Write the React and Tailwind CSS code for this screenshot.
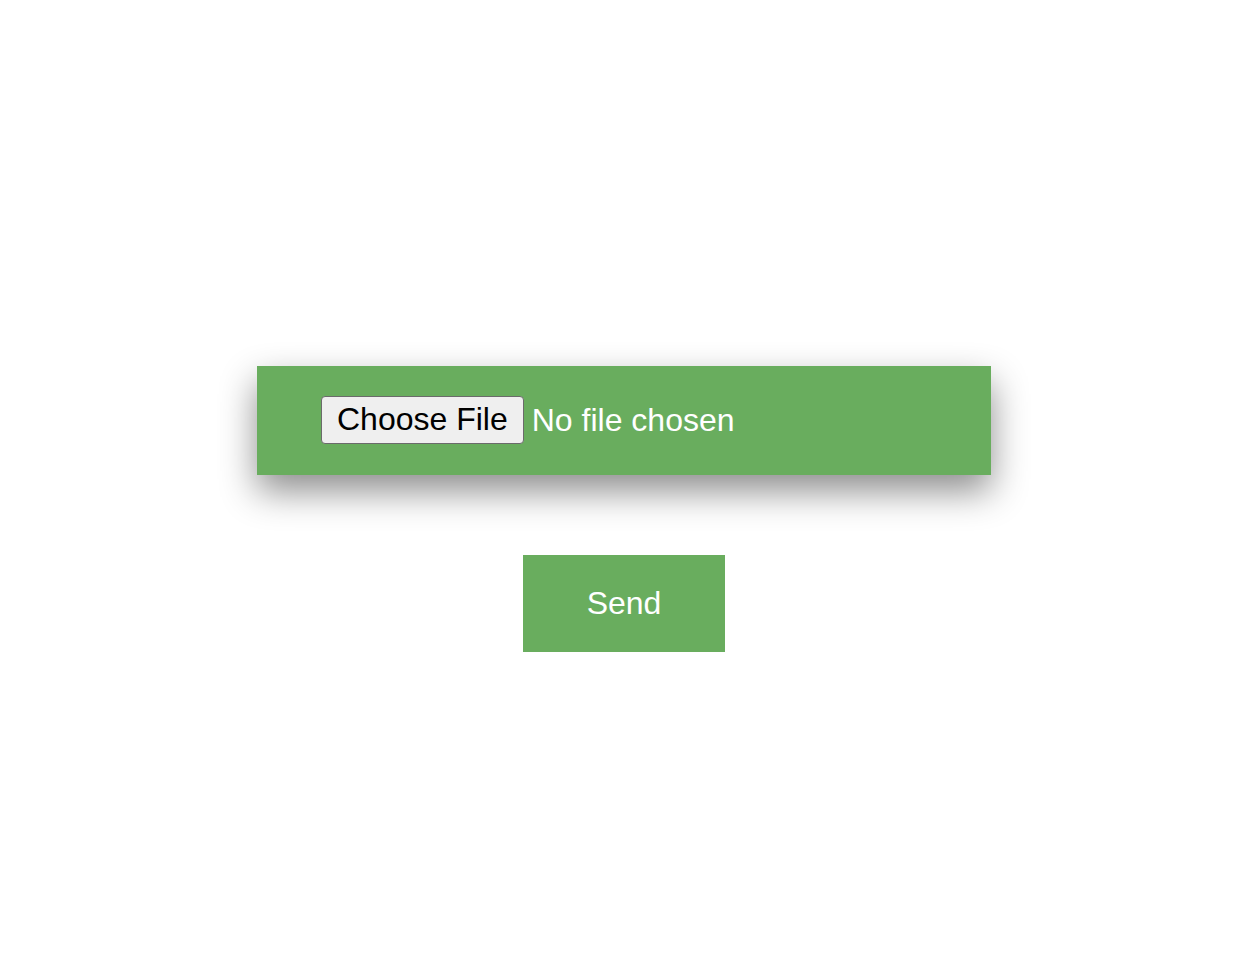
import React, { useState } from 'react';

const App = () => {
    const [file, setFile] = useState(null); // nombre del archivo elegido

    return (
        <div className="min-h-screen bg-white flex flex-col items-center pt-[366px] pl-[8px]" style={{ fontFamily: '"Liberation Sans", Arial, sans-serif' }}>
            {/* caja del input */}
            <div className="w-[734px] h-[109px] bg-[#69ad5e] flex items-center pl-[64px] shadow-[0_16px_36px_rgba(0,0,0,0.45)]">
                <label className="flex items-center cursor-pointer pb-[2px]">
                    <input type="file" className="hidden" onChange={e => setFile(e.target.files[0]?.name || null)} />
                    <span className="h-[48px] px-[15px] pb-[2px] flex items-center bg-[#efefef] border border-[#6b6b6b] rounded-[4px] text-[32px] text-black leading-none">
                        Choose File
                    </span>
                    <span className="ml-[8px] text-[32px] text-white leading-none">
                        {file ? file : "No file chosen"}
                    </span>
                </label>
            </div>

            {/* boton enviar */}
            <button className="mt-[80px] w-[202px] h-[97px] pb-[2px] bg-[#69ad5e] text-white text-[32px] leading-none flex items-center justify-center">
                Send
            </button>
        </div>
    );
};

export default App;
